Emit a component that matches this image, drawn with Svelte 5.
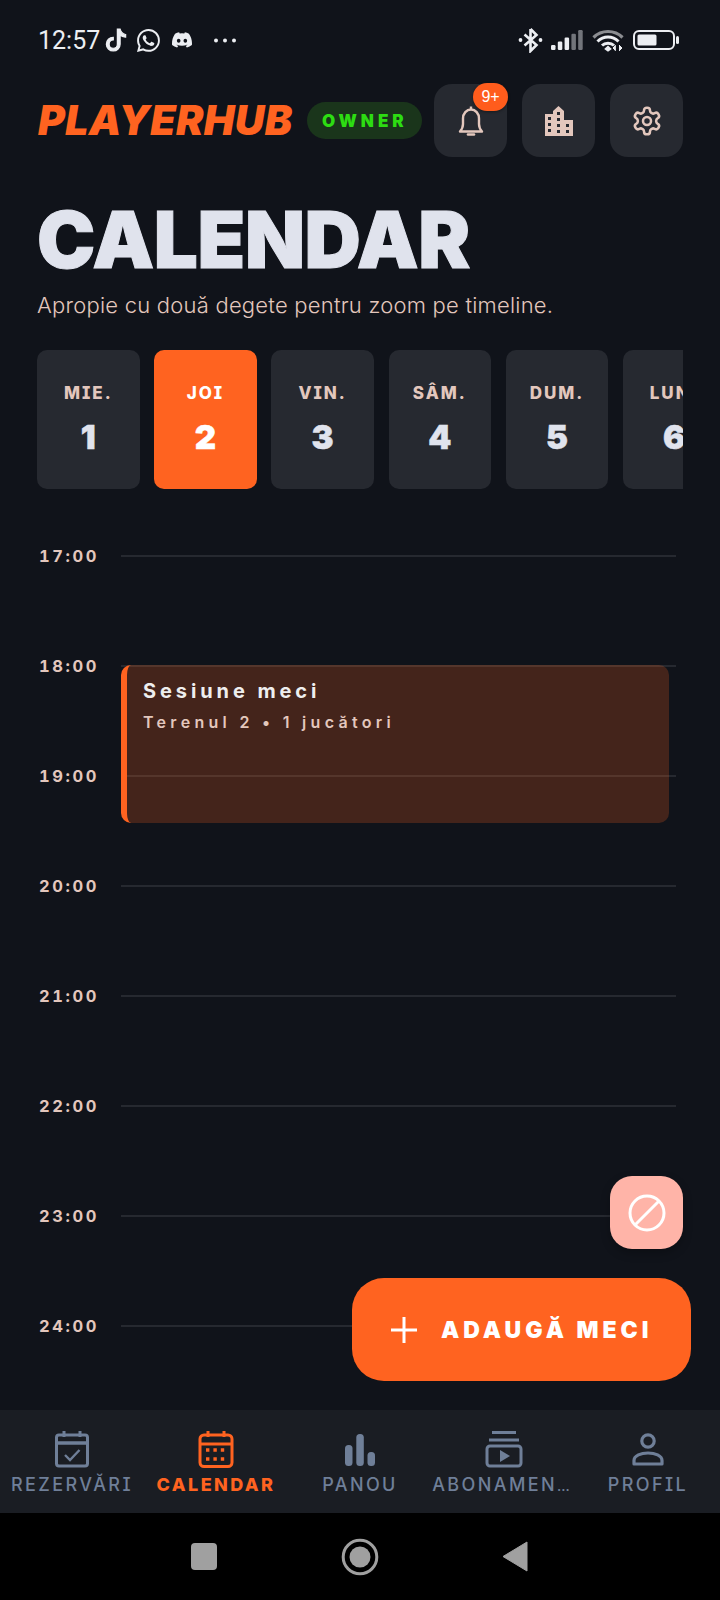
<script>
	const days = [
		{ name: 'MIE.', num: 1 },
		{ name: 'JOI', num: 2, active: true },
		{ name: 'VIN.', num: 3 },
		{ name: 'SÂM.', num: 4 },
		{ name: 'DUM.', num: 5 },
		{ name: 'LUN.', num: 6 }
	]
	const hours = ['17:00', '18:00', '19:00', '20:00', '21:00', '22:00', '23:00', '24:00']
</script>

<div class="page">
	<div class="status">
		<span class="time">12:57</span>
		<svg class="st-tiktok" viewBox="0 0 16 16"><path d="M9 0h1.98c.144.715.54 1.617 1.235 2.512C12.895 3.389 13.797 4 15 4v2c-1.753 0-3.07-.814-4-1.829V11a5 5 0 1 1-5-5v2a3 3 0 1 0 3 3V0Z" stroke="#eceef2" stroke-width="0.9" /></svg>
		<svg class="st-whatsapp" viewBox="0 0 16 16"><path d="M13.601 2.326A7.854 7.854 0 0 0 7.994 0C3.627 0 .068 3.558.064 7.926c0 1.399.366 2.76 1.057 3.965L0 16l4.204-1.102a7.933 7.933 0 0 0 3.79.965h.004c4.368 0 7.926-3.558 7.93-7.93A7.898 7.898 0 0 0 13.6 2.326zM7.994 14.521a6.573 6.573 0 0 1-3.356-.92l-.24-.144-2.494.654.666-2.433-.156-.251a6.56 6.56 0 0 1-1.007-3.505c0-3.626 2.957-6.584 6.591-6.584a6.56 6.56 0 0 1 4.66 1.931 6.557 6.557 0 0 1 1.928 4.66c-.004 3.639-2.961 6.592-6.592 6.592zm3.615-4.934c-.197-.099-1.17-.578-1.353-.646-.182-.065-.315-.099-.445.099-.133.197-.513.646-.627.775-.114.133-.232.148-.43.05-.197-.1-.836-.308-1.592-.985-.59-.525-.985-1.175-1.103-1.372-.114-.198-.011-.304.088-.403.087-.088.197-.232.296-.346.1-.114.133-.198.198-.33.065-.134.034-.248-.015-.347-.05-.099-.445-1.076-.612-1.47-.16-.389-.323-.335-.445-.34-.114-.007-.247-.007-.38-.007a.729.729 0 0 0-.529.247c-.182.198-.691.677-.691 1.654 0 .977.71 1.916.81 2.049.098.133 1.394 2.132 3.383 2.992.47.205.84.326 1.129.418.475.152.904.129 1.246.08.38-.058 1.171-.48 1.338-.943.164-.464.164-.86.114-.943-.049-.084-.182-.133-.38-.232z" /></svg>
		<svg class="st-discord" viewBox="0 0 16 16"><path d="M13.545 2.907a13.227 13.227 0 0 0-3.257-1.011.05.05 0 0 0-.052.025c-.141.25-.297.577-.406.833a12.19 12.19 0 0 0-3.658 0 8.258 8.258 0 0 0-.412-.833.051.051 0 0 0-.052-.025c-1.125.194-2.22.534-3.257 1.011a.041.041 0 0 0-.021.018C.356 6.024-.213 9.047.066 12.032c.001.014.01.028.021.037a13.276 13.276 0 0 0 3.995 2.02.05.05 0 0 0 .056-.019c.308-.42.582-.863.818-1.329a.05.05 0 0 0-.01-.059.051.051 0 0 0-.018-.011 8.875 8.875 0 0 1-1.248-.595.05.05 0 0 1-.02-.066.051.051 0 0 1 .015-.019c.084-.063.168-.129.248-.195a.05.05 0 0 1 .051-.007c2.619 1.196 5.454 1.196 8.041 0a.052.052 0 0 1 .053.007c.08.066.164.132.248.195a.051.051 0 0 1-.004.085 8.254 8.254 0 0 1-1.249.594.05.05 0 0 0-.03.03.052.052 0 0 0 .003.041c.24.465.515.909.817 1.329a.05.05 0 0 0 .056.019 13.235 13.235 0 0 0 4.001-2.02.049.049 0 0 0 .021-.037c.334-3.451-.559-6.449-2.366-9.106a.034.034 0 0 0-.02-.019Zm-8.198 7.307c-.789 0-1.438-.724-1.438-1.612 0-.889.637-1.613 1.438-1.613.807 0 1.45.73 1.438 1.613 0 .888-.637 1.612-1.438 1.612Zm5.316 0c-.788 0-1.438-.724-1.438-1.612 0-.889.637-1.613 1.438-1.613.807 0 1.451.73 1.438 1.613 0 .888-.631 1.612-1.438 1.612Z" /></svg>
		<svg class="st-dots" viewBox="0 0 24 4"><circle cx="3" cy="2" r="2" /><circle cx="12" cy="2" r="2" /><circle cx="21" cy="2" r="2" /></svg>
		<span class="spacer"></span>
		<svg class="st-bt" viewBox="0 0 25 26"><path d="M12.5 2v22l6-6-12-10.5M12.5 2l6 6-12 10.5" fill="none" stroke="#eceef2" stroke-width="2.6" /><circle cx="2.5" cy="13" r="1.9" /><circle cx="22.5" cy="13" r="1.9" /></svg>
		<svg class="st-signal" viewBox="0 0 32 20">
			<rect x="0" y="15" width="4.5" height="5" rx="1.2" />
			<rect x="6.8" y="11.5" width="4.5" height="8.5" rx="1.2" />
			<rect x="13.6" y="7.5" width="4.5" height="12.5" rx="1.2" />
			<rect x="20.4" y="3.8" width="4.5" height="16.2" rx="1.2" opacity="0.45" />
			<rect x="27.2" y="0" width="4.5" height="20" rx="1.2" opacity="0.45" />
		</svg>
		<svg class="st-wifi" viewBox="0 0 32 23">
			<path d="M1.5 8.5C9.5 .5 22.5 .5 30.5 8.5" fill="none" stroke="#8b8d91" stroke-width="3.2" />
			<path d="M5.5 12.5C11.5 6.5 20.5 6.5 26.5 12.5" fill="none" stroke="#eceef2" stroke-width="3" />
			<path d="M10 16.5C13 13.5 19 13.5 22 16.5" fill="none" stroke="#eceef2" stroke-width="3" />
			<path d="M12.2 20l3.8-3.4 3.8 3.4-3.8 2.8z" />
			<path d="M23.3 16v6M27.5 16v6M21 19l2-2v4zM30 19l-2-2v4z" stroke="#eceef2" stroke-width="1" />
		</svg>
		<svg class="st-batt" viewBox="0 0 46 20">
			<rect x="1" y="1" width="40" height="18" rx="5" fill="none" stroke="#eceef2" stroke-width="2" />
			<rect x="4.5" y="4.5" width="19" height="11" rx="1.5" />
			<rect x="43" y="6" width="3" height="8" rx="1.5" />
		</svg>
	</div>

	<header class="topbar">
		<span class="logo">PLAYERHUB</span>
		<span class="role">OWNER</span>
		<span class="spacer"></span>
		<div class="actions">
			<button class="icon-btn">
				<svg width="30" height="32" viewBox="0 0 30 32" fill="none" stroke="#e3c7bd" stroke-width="2.4"><path d="M4 26.5c1.8-2 3-3.8 3-7.5v-5.5C7 8.500 10.500 4.500 15 4.500s8 4 8 9V19c0 3.700 1.200 5.500 3 7.500z" stroke-linejoin="round" /><path d="M15 1.500v3" /><path d="M12 29.500h6" stroke-width="2.600" stroke-linecap="round" /></svg>
				<span class="badge">9+</span>
			</button>
			<button class="icon-btn">
				<svg width="28" height="30" viewBox="0 0 28 30"><path fill="#e3c7bd" fill-rule="evenodd" d="M0 8h8V5l5.500-5 5.500 5v9h9v16H0zM3 11v3h3v-3zM12 6v3h3V6zM12 12v3h3v-3zM3 17v3h3v-3zM12 18v3h3v-3zM21 18v3h3v-3zM3 23v3h3v-3zM12 24v3h3v-3zM21 24v3h3v-3z" /></svg>
			</button>
			<button class="icon-btn">
				<svg width="32" height="32" viewBox="0 0 24 24" fill="none" stroke="#e3c7bd" stroke-width="1.9" stroke-linejoin="round"><path d="M12.220 2h-.44a2 2 0 0 0-2 2v.18a2 2 0 0 1-1 1.730l-.43.25a2 2 0 0 1-2 0l-.15-.08a2 2 0 0 0-2.730.73l-.22.38a2 2 0 0 0 .73 2.730l.15.1a2 2 0 0 1 1 1.720v.51a2 2 0 0 1-1 1.740l-.15.09a2 2 0 0 0-.73 2.730l.22.38a2 2 0 0 0 2.730.73l.15-.08a2 2 0 0 1 2 0l.43.25a2 2 0 0 1 1 1.730V20a2 2 0 0 0 2 2h.44a2 2 0 0 0 2-2v-.18a2 2 0 0 1 1-1.730l.43-.25a2 2 0 0 1 2 0l.15.08a2 2 0 0 0 2.730-.73l.22-.39a2 2 0 0 0-.73-2.730l-.15-.08a2 2 0 0 1-1-1.740v-.5a2 2 0 0 1 1-1.740l.15-.09a2 2 0 0 0 .73-2.730l-.22-.38a2 2 0 0 0-2.730-.73l-.15.08a2 2 0 0 1-2 0l-.43-.25a2 2 0 0 1-1-1.730V4a2 2 0 0 0-2-2z" /><circle cx="12" cy="12" r="3" /></svg>
			</button>
		</div>
	</header>

	<h1>CALENDAR</h1>
	<p class="subtitle">Apropie cu două degete pentru zoom pe timeline.</p>

	<div class="days">
		{#each days as day}
			<div class="day" class:active={day.active}>
				<span class="day-name">{day.name}</span>
				<span class="day-num">{day.num}</span>
			</div>
		{/each}
	</div>

	<div class="timeline">
		{#each hours as hour}
			<div class="hour">
				<span class="hour-label">{hour}</span>
				<span class="hour-line"></span>
			</div>
		{/each}
		<div class="event">
			<div class="event-title">Sesiune meci</div>
			<div class="event-sub">Terenul 2 • 1 jucători</div>
		</div>
	</div>

	<button class="fab-block" aria-label="Blocheaza">
		<svg width="40" height="40" viewBox="0 0 40 40" fill="none" stroke="#fff" stroke-width="3"><circle cx="20" cy="20" r="17" /><path d="M8 32L32 8" /></svg>
	</button>
	<button class="fab-add">
		<svg width="28" height="28" viewBox="0 0 28 28" stroke="#fff" stroke-width="3"><path d="M14 1v26M1 14h26" /></svg>
		<span>ADAUGĂ MECI</span>
	</button>

	<nav class="tabs">
		<div class="tab">
			<svg width="36" height="38" viewBox="0 0 36 38" fill="none" stroke="currentColor" stroke-width="3"><rect x="2.500" y="5" width="31" height="31" rx="2.500" /><path d="M2.500 13h31" stroke-width="3.500" /><path d="M10 1v6M26 1v6" /><path d="M11 25l5 5 9.500-10" stroke-width="2.400" /></svg>
			<span>REZERVĂRI</span>
		</div>
		<div class="tab current">
			<svg width="36" height="38" viewBox="0 0 36 38" fill="none" stroke="currentColor" stroke-width="3"><rect x="2" y="5" width="32" height="31.500" rx="4" /><path d="M2 14h32" /><path d="M10 1v6M26 1v6" /><path d="M8 20h20M8 29h20" stroke-width="3.400" stroke-dasharray="3.400 4" /></svg>
			<span>CALENDAR</span>
		</div>
		<div class="tab">
			<svg width="36" height="38" viewBox="0 0 36 38"><rect x="3" y="15" width="7.500" height="21" rx="3.500" fill="currentColor" /><rect x="14.300" y="4" width="7.500" height="32" rx="3.500" fill="currentColor" /><rect x="25.500" y="22" width="7.500" height="14" rx="3.500" fill="currentColor" /></svg>
			<span>PANOU</span>
		</div>
		<div class="tab">
			<svg width="38" height="38" viewBox="0 0 38 38" fill="none" stroke="currentColor" stroke-width="3"><path d="M7 2.500h24M4 10h30" /><rect x="2" y="16" width="34" height="20" rx="3" /><path d="M15 20v12l10-6z" fill="currentColor" stroke="none" /></svg>
			<span>ABONAMEN<i class="ell">…</i></span>
		</div>
		<div class="tab">
			<svg width="36" height="38" viewBox="0 0 36 38" fill="none" stroke="currentColor" stroke-width="3.200"><circle cx="18" cy="11" r="6.200" /><path d="M4 34v-3.500c0-5 7-7.500 14-7.500s14 2.500 14 7.500V34z" stroke-linejoin="round" /></svg>
			<span>PROFIL</span>
		</div>
	</nav>

	<div class="sysnav">
		<span class="sys-square"></span>
		<svg width="38" height="38" viewBox="0 0 38 38"><circle cx="19" cy="19" r="16.800" fill="none" stroke="#a0a0a0" stroke-width="3" /><circle cx="19" cy="19" r="10.500" fill="#a0a0a0" /></svg>
		<svg width="26" height="31" viewBox="0 0 26 31"><path d="M25 1v29L1 15.500z" fill="#a0a0a0" stroke="#a0a0a0" stroke-linejoin="round" /></svg>
	</div>
</div>

<style>
	:global(body) {
		background: #10131a;
	}

	.page {
		position: relative;
		width: 720px;
		height: 1600px;
		display: flex;
		flex-direction: column;
		overflow: hidden;
		background: #10131a;
		font-family: Inter, 'Noto Sans', sans-serif;
		color: #e0e3ed;
	}

	.spacer {
		flex: 1;
	}

	.status {
		height: 26px;
		margin-top: 27px;
		padding: 0 41px 0 38px;
		display: flex;
		align-items: center;
	}

	.status svg {
		fill: #eceef2;
		flex: none;
	}

	.time {
		font-family: Roboto, sans-serif;
		font-size: 25px;
		color: #eceef2;
	}

	.st-tiktok {
		width: 22px;
		height: 24px;
		margin-left: 5px;
	}

	.st-whatsapp {
		width: 23px;
		height: 23px;
		margin-left: 10px;
	}

	.st-discord {
		width: 20px;
		height: 20px;
		margin-left: 12px;
	}

	.st-dots {
		width: 24px;
		height: 5px;
		margin-left: 21px;
	}

	.st-bt {
		width: 25px;
		height: 26px;
	}

	.st-signal {
		width: 32px;
		height: 20px;
		margin-left: 8px;
	}

	.st-wifi {
		width: 32px;
		height: 23px;
		margin-left: 9px;
	}

	.st-batt {
		width: 46px;
		height: 20px;
		margin-left: 9px;
	}

	.topbar {
		margin-top: 31px;
		padding: 0 37px 0 38px;
		display: flex;
		align-items: center;
	}

	.logo {
		margin-right: 15px;
		font-size: 41px;
		font-weight: 900;
		font-style: italic;
		letter-spacing: 0.3px;
		color: #ff6320;
		line-height: 1;
	}

	.role {
		flex: none;
		width: 115px;
		height: 37px;
		border-radius: 19px;
		background: #1a351b;
		color: #2ddc12;
		font-size: 17px;
		font-weight: 900;
		letter-spacing: 4px;
		display: flex;
		align-items: center;
		justify-content: center;
	}

	.actions {
		flex: none;
		display: flex;
		gap: 15px;
	}

	.icon-btn {
		position: relative;
		flex: none;
		width: 73px;
		height: 73px;
		border: none;
		border-radius: 18px;
		background: #262930;
		display: flex;
		align-items: center;
		justify-content: center;
		padding: 0;
	}

	.badge {
		position: absolute;
		top: -1px;
		right: -1px;
		width: 35px;
		height: 28px;
		border-radius: 14px;
		background: #ff5c1c;
		color: #fff;
		font-size: 16px;
		display: flex;
		align-items: center;
		justify-content: center;
		box-shadow: 0 1px 3px rgba(0, 0, 0, 0.4);
	}

	h1 {
		margin: 43px 0 0 37px;
		font-size: 78px;
		font-weight: 900;
		line-height: 80px;
		letter-spacing: -0.4px;
		color: #e0e3ed;
		-webkit-text-stroke: 1px #e0e3ed;
	}

	.subtitle {
		margin: 10px 0 0 37px;
		font-size: 22px;
		font-weight: 300;
		letter-spacing: 0.22px;
		line-height: 30px;
		color: #e3c7bd;
	}

	.days {
		margin: 30px 37px 0 37px;
		display: flex;
		gap: 14.700px;
		overflow: hidden;
	}

	.day {
		flex: none;
		width: 102.500px;
		height: 139px;
		border-radius: 10px;
		background: #262930;
		display: flex;
		flex-direction: column;
		align-items: center;
		padding-top: 32px;
		box-sizing: border-box;
	}

	.day.active {
		background: #ff6320;
	}

	.day-name {
		font-size: 17px;
		font-weight: 800;
		letter-spacing: 2px;
		line-height: 22px;
		color: #e3c7bd;
		font-feature-settings: 'cv08';
	}

	.day-num {
		margin-top: 13px;
		font-size: 33px;
		font-weight: 900;
		line-height: 40px;
		color: #e0e3ed;
		-webkit-text-stroke: 0.5px currentColor;
	}

	.day.active .day-name,
	.day.active .day-num {
		color: #fff;
	}

	.timeline {
		position: relative;
		flex: 1;
		margin-top: 22px;
		padding-top: 44px;
		overflow: hidden;
	}

	.hour {
		height: 110px;
		display: flex;
		align-items: flex-start;
		padding: 0 44px 0 39px;
	}

	.hour-label {
		width: 82px;
		flex: none;
		margin-top: -10px;
		font-size: 16.500px;
		font-weight: 700;
		font-variant-numeric: tabular-nums;
		letter-spacing: 2.600px;
		line-height: 22px;
		color: #e3c7bd;
	}

	.hour-line {
		flex: 1;
		height: 2px;
		background: #262930;
	}

	.event {
		position: absolute;
		top: 154px;
		left: 121px;
		width: 548px;
		height: 158px;
		box-sizing: border-box;
		padding: 13px 0 0 16px;
		border-left: 6px solid #ff6320;
		border-radius: 10px;
		background: rgba(255, 99, 32, 0.22);
	}

	.event-title {
		font-size: 20px;
		font-weight: 700;
		letter-spacing: 3.900px;
		line-height: 26px;
		color: #eee;
	}

	.event-sub {
		margin-top: 6px;
		font-size: 16px;
		font-weight: 600;
		letter-spacing: 4.300px;
		line-height: 24px;
		color: #e3c7bd;
	}

	.fab-block {
		position: absolute;
		top: 1176px;
		left: 610px;
		width: 73px;
		height: 73px;
		border: none;
		border-radius: 22px;
		padding: 0;
		background: #ffb4a8;
		display: flex;
		align-items: center;
		justify-content: center;
		box-shadow: 0 4px 10px rgba(0, 0, 0, 0.25);
	}

	.fab-add {
		position: absolute;
		top: 1278px;
		left: 352px;
		width: 339px;
		height: 103px;
		border: none;
		border-radius: 32px;
		padding: 0 0 0 38px;
		background: #ff6320;
		display: flex;
		align-items: center;
		gap: 23px;
		color: #fff;
		font-family: Inter, sans-serif;
		font-size: 23px;
		font-weight: 900;
		letter-spacing: 4px;
	}

	.tabs {
		height: 103px;
		flex: none;
		background: #1a1d23;
		display: grid;
		grid-template-columns: repeat(5, 144px);
	}

	.tab {
		display: flex;
		flex-direction: column;
		align-items: center;
		padding-top: 20px;
		color: #6f7f98;
	}

	.tab span {
		margin-top: 5px;
		font-size: 18px;
		font-weight: 500;
		letter-spacing: 2.400px;
		line-height: 24px;
		white-space: nowrap;
		font-feature-settings: 'cv08';
	}

	.ell {
		margin-right: 6px;
		font-style: normal;
		font-size: 14px;
		letter-spacing: 0;
	}

	.tab.current {
		color: #ff6320;
	}

	.tab.current span {
		font-weight: 800;
	}

	.sysnav {
		height: 87px;
		flex: none;
		background: #000;
		display: flex;
		align-items: center;
		padding-left: 191px;
	}

	.sysnav svg:nth-child(2) {
		margin-left: 124px;
	}

	.sysnav svg:nth-child(3) {
		margin-left: 123px;
	}

	.sys-square {
		width: 26px;
		height: 27px;
		border-radius: 4px;
		background: #a0a0a0;
	}
</style>
